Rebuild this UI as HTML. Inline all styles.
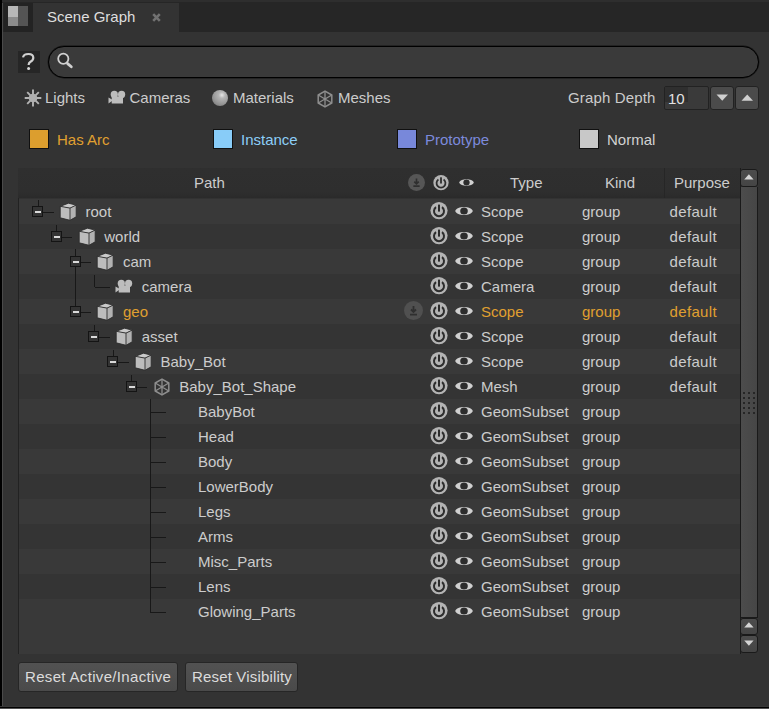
<!DOCTYPE html><html><head><meta charset="utf-8"><style>
*{margin:0;padding:0;box-sizing:border-box}
html,body{width:769px;height:709px;overflow:hidden;background:#333333;font-family:"Liberation Sans",sans-serif;font-size:15px;color:#cccccc}
div,svg{position:absolute}
.t{white-space:nowrap;line-height:16px}
</style></head><body>
<div style="left:0px;top:0px;width:769px;height:32px;background:#262626"></div>
<div style="left:0px;top:0px;width:769px;height:2px;background:#2e2e2e"></div>
<div style="left:0px;top:0px;width:2px;height:709px;background:#000"></div>
<div style="left:2px;top:3px;width:1px;height:704px;background:#4a4a4a"></div>
<div style="left:0px;top:706px;width:769px;height:1px;background:#383838"></div>
<div style="left:0px;top:707px;width:769px;height:1px;background:#000"></div>
<div style="left:0px;top:708px;width:769px;height:1px;background:#505050"></div>
<div style="left:4px;top:3px;width:29px;height:29px;background:#232323"></div>
<div style="left:8px;top:6px;width:10px;height:11px;background:#b8b8b8"></div>
<div style="left:8px;top:17px;width:10px;height:9px;background:#8c8c8c"></div>
<div style="left:18px;top:6px;width:10px;height:20px;background:#545454"></div>
<div style="left:33px;top:3px;width:146px;height:29px;background:#333"></div>
<div class="t" style="left:47px;top:9px;color:#dedede">Scene Graph</div>
<svg style="left:152px;top:13px" width="9" height="9" viewBox="0 0 9 9"><path d="M1.2 1.2 L7.8 7.8 M7.8 1.2 L1.2 7.8" stroke="#727272" stroke-width="2.6"/></svg>
<div style="left:18px;top:51px;width:22px;height:22px;background:#262626"></div>
<svg style="left:18px;top:51px" width="22" height="22" viewBox="0 0 22 22"><path d="M5 6.4 Q5.6 3 10.5 3 Q15.3 3 15.3 6.7 Q15.3 9.2 12.5 10.8 Q10.6 11.9 10.6 14" fill="none" stroke="#d0d0d0" stroke-width="2.2"/><circle cx="10.6" cy="17.6" r="1.5" fill="#d8d8d8"/></svg>
<div style="left:48px;top:46px;width:711px;height:32px;border:1px solid #000;border-radius:16px;background:#3a3a3a;box-shadow:0 0 0 0.4px rgba(0,0,0,0.6)"></div>
<svg style="left:54px;top:49px" width="22" height="22" viewBox="0 0 22 22"><circle cx="9.3" cy="9.8" r="5.1" fill="#2e2e2e" stroke="#d0d0d0" stroke-width="1.8"/><path d="M13.6 14.6 L17.3 17.8" stroke="#d0d0d0" stroke-width="2.8" stroke-linecap="round"/></svg>
<svg style="left:24px;top:89px" width="18" height="18" viewBox="0 0 18 18"><path d="M9 0.5 V17.5 M0.7 9 H17.3 M3.2 3.2 L14.8 14.8 M14.8 3.2 L3.2 14.8" stroke="#b4b4b4" stroke-width="1.9"/><circle cx="9" cy="9" r="4.3" fill="#b0b0b0"/></svg>
<div class="t" style="left:45px;top:90px;">Lights</div>
<svg style="left:107px;top:89px" width="20" height="16" viewBox="0 0 20 16"><circle cx="7.3" cy="5.4" r="3.6" fill="#bdbdbd"/><circle cx="14.6" cy="5.4" r="3.6" fill="#bdbdbd"/><rect x="4.7" y="7.5" width="11.3" height="7" fill="#bdbdbd"/><path d="M1.5 8.5 L5 10.5 L5 12 L1.5 14.5 Z" fill="#bdbdbd"/></svg>
<div class="t" style="left:129.5px;top:90px;">Cameras</div>
<div style="left:212px;top:90px;width:16px;height:16px;border-radius:50%;background:radial-gradient(circle at 62% 32%,#e6e6e6 0,#b4b4b4 22%,#9a9a9a 55%,#6e6e6e 100%)"></div>
<div class="t" style="left:233px;top:90px;">Materials</div>
<svg style="left:316px;top:90px" width="18" height="18" viewBox="0 0 18 18"><path d="M9 1.1 L15.8 5 L15.8 13 L9 16.9 L2.2 13 L2.2 5 Z" fill="none" stroke="#8e8e8e" stroke-width="1.5" stroke-linejoin="round"/><path d="M2.2 5 L15.8 13 M15.8 5 L2.2 13 M9 1.1 L9 16.9" stroke="#8e8e8e" stroke-width="1.3"/></svg>
<div class="t" style="left:338px;top:90px;">Meshes</div>
<div class="t" style="left:568px;top:90px;letter-spacing:0.15px">Graph Depth</div>
<div style="left:664px;top:86px;width:45px;height:24px;background:#3a3a3a;border:1px solid #222;border-radius:2px"></div>
<div style="left:665px;top:87px;width:23px;height:15px;background:#2f2f2f"></div>
<div class="t" style="left:668px;top:91px;color:#e2e2e2">10</div>
<div style="left:710px;top:86px;width:24px;height:24px;background:#4b4b4b;border:1px solid #222;border-radius:3px"></div>
<svg style="left:716px;top:94px" width="13" height="7" viewBox="0 0 13 7"><path d="M0.5 0.5 L12 0.5 L6.25 6.8 Z" fill="#cfcfcf"/></svg>
<div style="left:735px;top:86px;width:24px;height:24px;background:#4b4b4b;border:1px solid #222;border-radius:3px"></div>
<svg style="left:741px;top:94px" width="13" height="7" viewBox="0 0 13 7"><path d="M0.5 6.8 L12 6.8 L6.25 0.5 Z" fill="#cfcfcf"/></svg>
<div style="left:29px;top:129px;width:20px;height:20px;background:#dc9e2e;border:1px solid #101010"></div>
<div class="t" style="left:57px;top:132px;color:#e0a030">Has Arc</div>
<div style="left:213px;top:129px;width:20px;height:20px;background:#88ccf8;border:1px solid #101010"></div>
<div class="t" style="left:241px;top:132px;color:#8ccef8">Instance</div>
<div style="left:397px;top:129px;width:20px;height:20px;background:#7888da;border:1px solid #101010"></div>
<div class="t" style="left:425px;top:132px;color:#7c8adc">Prototype</div>
<div style="left:579px;top:129px;width:20px;height:20px;background:#c8c8c8;border:1px solid #101010"></div>
<div class="t" style="left:607px;top:132px;color:#d2d2d2">Normal</div>
<div style="left:18px;top:168px;width:723px;height:486px;background:#393939"></div>
<div style="left:18px;top:168px;width:722px;height:30px;background:linear-gradient(180deg,#2f2f2f 0,#2e2e2e 80%,#2a2a2a 100%)"></div>
<div style="left:19px;top:198px;width:721px;height:1px;background:#323232"></div>
<div class="t" style="left:194px;top:175px;">Path</div>
<svg style="left:408px;top:174px" width="17" height="17" viewBox="0 0 19 19"><circle cx="9.5" cy="9.5" r="9.5" fill="#565656"/><path d="M9.5 5 L9.5 11 M7 8.5 L9.5 11 L12 8.5 M6 13.6 L13 13.6" stroke="#2f2f2f" stroke-width="1.8" fill="none"/></svg>
<svg style="left:433px;top:175px" width="16" height="16" viewBox="0 0 18 18"><circle cx="9" cy="8.6" r="8.6" fill="#b4b4b4"/><path d="M6.1 5.1 A5 5 0 1 0 11.9 5.1" fill="none" stroke="#2c2c2c" stroke-width="2"/><rect x="6.7" y="2" width="4.6" height="8.2" fill="#b4b4b4"/><rect x="8" y="2.6" width="2" height="7" fill="#2c2c2c"/></svg>
<svg style="left:459px;top:178px" width="15" height="9" viewBox="0 0 18 10"><path d="M0.2 5 C2 -0.3 16 -0.3 17.8 5 C16 10.3 2 10.3 0.2 5 Z" fill="#d0d0d0"/><ellipse cx="9" cy="5" rx="3.8" ry="3.6" fill="#2c2c2c"/></svg>
<div class="t" style="left:510px;top:175px;">Type</div>
<div class="t" style="left:605px;top:175px;">Kind</div>
<div style="left:664px;top:168px;width:1px;height:30px;background:#262626"></div>
<div class="t" style="left:674px;top:175px;">Purpose</div>
<div style="left:18px;top:198px;width:1px;height:456px;background:#222"></div>
<div style="left:19px;top:199px;width:721px;height:25px;background:#393939"></div>
<div style="left:19px;top:224px;width:721px;height:25px;background:#343434"></div>
<div style="left:19px;top:249px;width:721px;height:25px;background:#393939"></div>
<div style="left:19px;top:274px;width:721px;height:25px;background:#343434"></div>
<div style="left:19px;top:299px;width:721px;height:25px;background:#393939"></div>
<div style="left:19px;top:324px;width:721px;height:25px;background:#343434"></div>
<div style="left:19px;top:349px;width:721px;height:25px;background:#393939"></div>
<div style="left:19px;top:374px;width:721px;height:25px;background:#343434"></div>
<div style="left:19px;top:399px;width:721px;height:25px;background:#393939"></div>
<div style="left:19px;top:424px;width:721px;height:25px;background:#343434"></div>
<div style="left:19px;top:449px;width:721px;height:25px;background:#393939"></div>
<div style="left:19px;top:474px;width:721px;height:25px;background:#343434"></div>
<div style="left:19px;top:499px;width:721px;height:25px;background:#393939"></div>
<div style="left:19px;top:524px;width:721px;height:25px;background:#343434"></div>
<div style="left:19px;top:549px;width:721px;height:25px;background:#393939"></div>
<div style="left:19px;top:574px;width:721px;height:25px;background:#343434"></div>
<div style="left:19px;top:599px;width:721px;height:25px;background:#393939"></div>
<div style="left:75px;top:249px;width:1px;height:57px;background:#181818"></div>
<div style="left:150px;top:399px;width:1px;height:214px;background:#181818"></div>
<div class="t" style="left:85.5px;top:204px;color:#cccccc">root</div>
<svg style="left:430px;top:202px" width="18" height="18" viewBox="0 0 18 18"><circle cx="9" cy="8.6" r="8.6" fill="#b4b4b4"/><path d="M6.1 5.1 A5 5 0 1 0 11.9 5.1" fill="none" stroke="#2c2c2c" stroke-width="2"/><rect x="6.7" y="2" width="4.6" height="8.2" fill="#b4b4b4"/><rect x="8" y="2.6" width="2" height="7" fill="#2c2c2c"/></svg>
<svg style="left:455px;top:206px" width="18" height="10" viewBox="0 0 18 10"><path d="M0.2 5 C2 -0.3 16 -0.3 17.8 5 C16 10.3 2 10.3 0.2 5 Z" fill="#d0d0d0"/><ellipse cx="9" cy="5" rx="3.8" ry="3.6" fill="#2c2c2c"/></svg>
<div class="t" style="left:481px;top:204px;color:#cccccc">Scope</div>
<div class="t" style="left:582px;top:204px;color:#cccccc">group</div>
<div class="t" style="left:669.5px;top:204px;color:#cccccc;letter-spacing:0.35px">default</div>
<div style="left:38px;top:200px;width:1px;height:6px;background:#181818"></div>
<div style="left:43px;top:212px;width:11px;height:1px;background:#181818"></div>
<div style="left:32px;top:206px;width:11px;height:11px;background:#343434;border:1px solid #141414"></div>
<div style="left:35px;top:211px;width:6px;height:2px;background:#dadada"></div>
<svg style="left:59px;top:202px" width="19" height="20" viewBox="0 0 19 20"><path d="M9.5 1.2 L17.2 3.1 L11 6.1 L1.2 4.3 Z" fill="#cacaca"/><path d="M1.2 4.3 L11 6.1 L11 18.3 L1.2 15.8 Z" fill="#bdbdbd"/><path d="M11 6.1 L17.2 3.1 L17.2 14.8 L11 18.3 Z" fill="#b2b2b2"/><path d="M9.5 1.2 L17.2 3.1 L17.2 14.8 L11 18.3 L1.2 15.8 L1.2 4.3 Z M1.2 4.3 L11 6.1 L17.2 3.1 M11 6.1 L11 18.3" fill="none" stroke="#2c2c2c" stroke-width="0.9" stroke-linejoin="round"/></svg>
<div class="t" style="left:104.25px;top:229px;color:#cccccc">world</div>
<svg style="left:430px;top:227px" width="18" height="18" viewBox="0 0 18 18"><circle cx="9" cy="8.6" r="8.6" fill="#b4b4b4"/><path d="M6.1 5.1 A5 5 0 1 0 11.9 5.1" fill="none" stroke="#2c2c2c" stroke-width="2"/><rect x="6.7" y="2" width="4.6" height="8.2" fill="#b4b4b4"/><rect x="8" y="2.6" width="2" height="7" fill="#2c2c2c"/></svg>
<svg style="left:455px;top:231px" width="18" height="10" viewBox="0 0 18 10"><path d="M0.2 5 C2 -0.3 16 -0.3 17.8 5 C16 10.3 2 10.3 0.2 5 Z" fill="#d0d0d0"/><ellipse cx="9" cy="5" rx="3.8" ry="3.6" fill="#2c2c2c"/></svg>
<div class="t" style="left:481px;top:229px;color:#cccccc">Scope</div>
<div class="t" style="left:582px;top:229px;color:#cccccc">group</div>
<div class="t" style="left:669.5px;top:229px;color:#cccccc;letter-spacing:0.35px">default</div>
<div style="left:56px;top:225px;width:1px;height:6px;background:#181818"></div>
<div style="left:62px;top:237px;width:10px;height:1px;background:#181818"></div>
<div style="left:51px;top:231px;width:11px;height:11px;background:#343434;border:1px solid #141414"></div>
<div style="left:54px;top:236px;width:6px;height:2px;background:#dadada"></div>
<svg style="left:78px;top:227px" width="19" height="20" viewBox="0 0 19 20"><path d="M9.5 1.2 L17.2 3.1 L11 6.1 L1.2 4.3 Z" fill="#cacaca"/><path d="M1.2 4.3 L11 6.1 L11 18.3 L1.2 15.8 Z" fill="#bdbdbd"/><path d="M11 6.1 L17.2 3.1 L17.2 14.8 L11 18.3 Z" fill="#b2b2b2"/><path d="M9.5 1.2 L17.2 3.1 L17.2 14.8 L11 18.3 L1.2 15.8 L1.2 4.3 Z M1.2 4.3 L11 6.1 L17.2 3.1 M11 6.1 L11 18.3" fill="none" stroke="#2c2c2c" stroke-width="0.9" stroke-linejoin="round"/></svg>
<div class="t" style="left:123.0px;top:254px;color:#cccccc">cam</div>
<svg style="left:430px;top:252px" width="18" height="18" viewBox="0 0 18 18"><circle cx="9" cy="8.6" r="8.6" fill="#b4b4b4"/><path d="M6.1 5.1 A5 5 0 1 0 11.9 5.1" fill="none" stroke="#2c2c2c" stroke-width="2"/><rect x="6.7" y="2" width="4.6" height="8.2" fill="#b4b4b4"/><rect x="8" y="2.6" width="2" height="7" fill="#2c2c2c"/></svg>
<svg style="left:455px;top:256px" width="18" height="10" viewBox="0 0 18 10"><path d="M0.2 5 C2 -0.3 16 -0.3 17.8 5 C16 10.3 2 10.3 0.2 5 Z" fill="#d0d0d0"/><ellipse cx="9" cy="5" rx="3.8" ry="3.6" fill="#2c2c2c"/></svg>
<div class="t" style="left:481px;top:254px;color:#cccccc">Scope</div>
<div class="t" style="left:582px;top:254px;color:#cccccc">group</div>
<div class="t" style="left:669.5px;top:254px;color:#cccccc;letter-spacing:0.35px">default</div>
<div style="left:75px;top:250px;width:1px;height:6px;background:#181818"></div>
<div style="left:81px;top:262px;width:10px;height:1px;background:#181818"></div>
<div style="left:70px;top:256px;width:11px;height:11px;background:#343434;border:1px solid #141414"></div>
<div style="left:73px;top:261px;width:6px;height:2px;background:#dadada"></div>
<svg style="left:96px;top:252px" width="19" height="20" viewBox="0 0 19 20"><path d="M9.5 1.2 L17.2 3.1 L11 6.1 L1.2 4.3 Z" fill="#cacaca"/><path d="M1.2 4.3 L11 6.1 L11 18.3 L1.2 15.8 Z" fill="#bdbdbd"/><path d="M11 6.1 L17.2 3.1 L17.2 14.8 L11 18.3 Z" fill="#b2b2b2"/><path d="M9.5 1.2 L17.2 3.1 L17.2 14.8 L11 18.3 L1.2 15.8 L1.2 4.3 Z M1.2 4.3 L11 6.1 L17.2 3.1 M11 6.1 L11 18.3" fill="none" stroke="#2c2c2c" stroke-width="0.9" stroke-linejoin="round"/></svg>
<div class="t" style="left:141.75px;top:279px;color:#cccccc">camera</div>
<svg style="left:430px;top:277px" width="18" height="18" viewBox="0 0 18 18"><circle cx="9" cy="8.6" r="8.6" fill="#b4b4b4"/><path d="M6.1 5.1 A5 5 0 1 0 11.9 5.1" fill="none" stroke="#2c2c2c" stroke-width="2"/><rect x="6.7" y="2" width="4.6" height="8.2" fill="#b4b4b4"/><rect x="8" y="2.6" width="2" height="7" fill="#2c2c2c"/></svg>
<svg style="left:455px;top:281px" width="18" height="10" viewBox="0 0 18 10"><path d="M0.2 5 C2 -0.3 16 -0.3 17.8 5 C16 10.3 2 10.3 0.2 5 Z" fill="#d0d0d0"/><ellipse cx="9" cy="5" rx="3.8" ry="3.6" fill="#2c2c2c"/></svg>
<div class="t" style="left:481px;top:279px;color:#cccccc">Camera</div>
<div class="t" style="left:582px;top:279px;color:#cccccc">group</div>
<div class="t" style="left:669.5px;top:279px;color:#cccccc;letter-spacing:0.35px">default</div>
<div style="left:94px;top:275px;width:1px;height:12px;background:#181818"></div>
<div style="left:95px;top:287px;width:15px;height:1px;background:#181818"></div>
<svg style="left:114px;top:278px" width="20" height="16" viewBox="0 0 20 16"><circle cx="7.3" cy="5.4" r="3.6" fill="#bdbdbd"/><circle cx="14.6" cy="5.4" r="3.6" fill="#bdbdbd"/><rect x="4.7" y="7.5" width="11.3" height="7" fill="#bdbdbd"/><path d="M1.5 8.5 L5 10.5 L5 12 L1.5 14.5 Z" fill="#bdbdbd"/></svg>
<div class="t" style="left:123.0px;top:304px;color:#e0a030">geo</div>
<svg style="left:404px;top:301px" width="19" height="19" viewBox="0 0 19 19"><circle cx="9.5" cy="9.5" r="9.5" fill="#505050"/><path d="M9.5 5 L9.5 11 M7 8.5 L9.5 11 L12 8.5 M6 13.6 L13 13.6" stroke="#2f2f2f" stroke-width="1.8" fill="none"/></svg>
<svg style="left:430px;top:302px" width="18" height="18" viewBox="0 0 18 18"><circle cx="9" cy="8.6" r="8.6" fill="#b4b4b4"/><path d="M6.1 5.1 A5 5 0 1 0 11.9 5.1" fill="none" stroke="#2c2c2c" stroke-width="2"/><rect x="6.7" y="2" width="4.6" height="8.2" fill="#b4b4b4"/><rect x="8" y="2.6" width="2" height="7" fill="#2c2c2c"/></svg>
<svg style="left:455px;top:306px" width="18" height="10" viewBox="0 0 18 10"><path d="M0.2 5 C2 -0.3 16 -0.3 17.8 5 C16 10.3 2 10.3 0.2 5 Z" fill="#d0d0d0"/><ellipse cx="9" cy="5" rx="3.8" ry="3.6" fill="#2c2c2c"/></svg>
<div class="t" style="left:481px;top:304px;color:#e0a030">Scope</div>
<div class="t" style="left:582px;top:304px;color:#e0a030">group</div>
<div class="t" style="left:669.5px;top:304px;color:#e0a030;letter-spacing:0.35px">default</div>
<div style="left:75px;top:300px;width:1px;height:6px;background:#181818"></div>
<div style="left:81px;top:312px;width:10px;height:1px;background:#181818"></div>
<div style="left:70px;top:306px;width:11px;height:11px;background:#343434;border:1px solid #141414"></div>
<div style="left:73px;top:311px;width:6px;height:2px;background:#dadada"></div>
<svg style="left:96px;top:302px" width="19" height="20" viewBox="0 0 19 20"><path d="M9.5 1.2 L17.2 3.1 L11 6.1 L1.2 4.3 Z" fill="#cacaca"/><path d="M1.2 4.3 L11 6.1 L11 18.3 L1.2 15.8 Z" fill="#bdbdbd"/><path d="M11 6.1 L17.2 3.1 L17.2 14.8 L11 18.3 Z" fill="#b2b2b2"/><path d="M9.5 1.2 L17.2 3.1 L17.2 14.8 L11 18.3 L1.2 15.8 L1.2 4.3 Z M1.2 4.3 L11 6.1 L17.2 3.1 M11 6.1 L11 18.3" fill="none" stroke="#2c2c2c" stroke-width="0.9" stroke-linejoin="round"/></svg>
<div class="t" style="left:141.75px;top:329px;color:#cccccc">asset</div>
<svg style="left:430px;top:327px" width="18" height="18" viewBox="0 0 18 18"><circle cx="9" cy="8.6" r="8.6" fill="#b4b4b4"/><path d="M6.1 5.1 A5 5 0 1 0 11.9 5.1" fill="none" stroke="#2c2c2c" stroke-width="2"/><rect x="6.7" y="2" width="4.6" height="8.2" fill="#b4b4b4"/><rect x="8" y="2.6" width="2" height="7" fill="#2c2c2c"/></svg>
<svg style="left:455px;top:331px" width="18" height="10" viewBox="0 0 18 10"><path d="M0.2 5 C2 -0.3 16 -0.3 17.8 5 C16 10.3 2 10.3 0.2 5 Z" fill="#d0d0d0"/><ellipse cx="9" cy="5" rx="3.8" ry="3.6" fill="#2c2c2c"/></svg>
<div class="t" style="left:481px;top:329px;color:#cccccc">Scope</div>
<div class="t" style="left:582px;top:329px;color:#cccccc">group</div>
<div class="t" style="left:669.5px;top:329px;color:#cccccc;letter-spacing:0.35px">default</div>
<div style="left:94px;top:325px;width:1px;height:6px;background:#181818"></div>
<div style="left:99px;top:337px;width:11px;height:1px;background:#181818"></div>
<div style="left:88px;top:331px;width:11px;height:11px;background:#343434;border:1px solid #141414"></div>
<div style="left:91px;top:336px;width:6px;height:2px;background:#dadada"></div>
<svg style="left:115px;top:327px" width="19" height="20" viewBox="0 0 19 20"><path d="M9.5 1.2 L17.2 3.1 L11 6.1 L1.2 4.3 Z" fill="#cacaca"/><path d="M1.2 4.3 L11 6.1 L11 18.3 L1.2 15.8 Z" fill="#bdbdbd"/><path d="M11 6.1 L17.2 3.1 L17.2 14.8 L11 18.3 Z" fill="#b2b2b2"/><path d="M9.5 1.2 L17.2 3.1 L17.2 14.8 L11 18.3 L1.2 15.8 L1.2 4.3 Z M1.2 4.3 L11 6.1 L17.2 3.1 M11 6.1 L11 18.3" fill="none" stroke="#2c2c2c" stroke-width="0.9" stroke-linejoin="round"/></svg>
<div class="t" style="left:160.5px;top:354px;color:#cccccc">Baby_Bot</div>
<svg style="left:430px;top:352px" width="18" height="18" viewBox="0 0 18 18"><circle cx="9" cy="8.6" r="8.6" fill="#b4b4b4"/><path d="M6.1 5.1 A5 5 0 1 0 11.9 5.1" fill="none" stroke="#2c2c2c" stroke-width="2"/><rect x="6.7" y="2" width="4.6" height="8.2" fill="#b4b4b4"/><rect x="8" y="2.6" width="2" height="7" fill="#2c2c2c"/></svg>
<svg style="left:455px;top:356px" width="18" height="10" viewBox="0 0 18 10"><path d="M0.2 5 C2 -0.3 16 -0.3 17.8 5 C16 10.3 2 10.3 0.2 5 Z" fill="#d0d0d0"/><ellipse cx="9" cy="5" rx="3.8" ry="3.6" fill="#2c2c2c"/></svg>
<div class="t" style="left:481px;top:354px;color:#cccccc">Scope</div>
<div class="t" style="left:582px;top:354px;color:#cccccc">group</div>
<div class="t" style="left:669.5px;top:354px;color:#cccccc;letter-spacing:0.35px">default</div>
<div style="left:113px;top:350px;width:1px;height:6px;background:#181818"></div>
<div style="left:118px;top:362px;width:11px;height:1px;background:#181818"></div>
<div style="left:107px;top:356px;width:11px;height:11px;background:#343434;border:1px solid #141414"></div>
<div style="left:110px;top:361px;width:6px;height:2px;background:#dadada"></div>
<svg style="left:134px;top:352px" width="19" height="20" viewBox="0 0 19 20"><path d="M9.5 1.2 L17.2 3.1 L11 6.1 L1.2 4.3 Z" fill="#cacaca"/><path d="M1.2 4.3 L11 6.1 L11 18.3 L1.2 15.8 Z" fill="#bdbdbd"/><path d="M11 6.1 L17.2 3.1 L17.2 14.8 L11 18.3 Z" fill="#b2b2b2"/><path d="M9.5 1.2 L17.2 3.1 L17.2 14.8 L11 18.3 L1.2 15.8 L1.2 4.3 Z M1.2 4.3 L11 6.1 L17.2 3.1 M11 6.1 L11 18.3" fill="none" stroke="#2c2c2c" stroke-width="0.9" stroke-linejoin="round"/></svg>
<div class="t" style="left:179.25px;top:379px;color:#cccccc">Baby_Bot_Shape</div>
<svg style="left:430px;top:377px" width="18" height="18" viewBox="0 0 18 18"><circle cx="9" cy="8.6" r="8.6" fill="#b4b4b4"/><path d="M6.1 5.1 A5 5 0 1 0 11.9 5.1" fill="none" stroke="#2c2c2c" stroke-width="2"/><rect x="6.7" y="2" width="4.6" height="8.2" fill="#b4b4b4"/><rect x="8" y="2.6" width="2" height="7" fill="#2c2c2c"/></svg>
<svg style="left:455px;top:381px" width="18" height="10" viewBox="0 0 18 10"><path d="M0.2 5 C2 -0.3 16 -0.3 17.8 5 C16 10.3 2 10.3 0.2 5 Z" fill="#d0d0d0"/><ellipse cx="9" cy="5" rx="3.8" ry="3.6" fill="#2c2c2c"/></svg>
<div class="t" style="left:481px;top:379px;color:#cccccc">Mesh</div>
<div class="t" style="left:582px;top:379px;color:#cccccc">group</div>
<div class="t" style="left:669.5px;top:379px;color:#cccccc;letter-spacing:0.35px">default</div>
<div style="left:131px;top:375px;width:1px;height:6px;background:#181818"></div>
<div style="left:137px;top:387px;width:10px;height:1px;background:#181818"></div>
<div style="left:126px;top:381px;width:11px;height:11px;background:#343434;border:1px solid #141414"></div>
<div style="left:129px;top:386px;width:6px;height:2px;background:#dadada"></div>
<svg style="left:153px;top:378px" width="18" height="18" viewBox="0 0 18 18"><path d="M9 1.1 L15.8 5 L15.8 13 L9 16.9 L2.2 13 L2.2 5 Z" fill="none" stroke="#8e8e8e" stroke-width="1.5" stroke-linejoin="round"/><path d="M2.2 5 L15.8 13 M15.8 5 L2.2 13 M9 1.1 L9 16.9" stroke="#8e8e8e" stroke-width="1.3"/></svg>
<div class="t" style="left:198.0px;top:404px;color:#cccccc">BabyBot</div>
<svg style="left:430px;top:402px" width="18" height="18" viewBox="0 0 18 18"><circle cx="9" cy="8.6" r="8.6" fill="#b4b4b4"/><path d="M6.1 5.1 A5 5 0 1 0 11.9 5.1" fill="none" stroke="#2c2c2c" stroke-width="2"/><rect x="6.7" y="2" width="4.6" height="8.2" fill="#b4b4b4"/><rect x="8" y="2.6" width="2" height="7" fill="#2c2c2c"/></svg>
<svg style="left:455px;top:406px" width="18" height="10" viewBox="0 0 18 10"><path d="M0.2 5 C2 -0.3 16 -0.3 17.8 5 C16 10.3 2 10.3 0.2 5 Z" fill="#d0d0d0"/><ellipse cx="9" cy="5" rx="3.8" ry="3.6" fill="#2c2c2c"/></svg>
<div class="t" style="left:481px;top:404px;color:#cccccc">GeomSubset</div>
<div class="t" style="left:582px;top:404px;color:#cccccc">group</div>
<div style="left:150px;top:400px;width:1px;height:12px;background:#181818"></div>
<div style="left:151px;top:412px;width:15px;height:1px;background:#181818"></div>
<div class="t" style="left:198.0px;top:429px;color:#cccccc">Head</div>
<svg style="left:430px;top:427px" width="18" height="18" viewBox="0 0 18 18"><circle cx="9" cy="8.6" r="8.6" fill="#b4b4b4"/><path d="M6.1 5.1 A5 5 0 1 0 11.9 5.1" fill="none" stroke="#2c2c2c" stroke-width="2"/><rect x="6.7" y="2" width="4.6" height="8.2" fill="#b4b4b4"/><rect x="8" y="2.6" width="2" height="7" fill="#2c2c2c"/></svg>
<svg style="left:455px;top:431px" width="18" height="10" viewBox="0 0 18 10"><path d="M0.2 5 C2 -0.3 16 -0.3 17.8 5 C16 10.3 2 10.3 0.2 5 Z" fill="#d0d0d0"/><ellipse cx="9" cy="5" rx="3.8" ry="3.6" fill="#2c2c2c"/></svg>
<div class="t" style="left:481px;top:429px;color:#cccccc">GeomSubset</div>
<div class="t" style="left:582px;top:429px;color:#cccccc">group</div>
<div style="left:150px;top:425px;width:1px;height:12px;background:#181818"></div>
<div style="left:151px;top:437px;width:15px;height:1px;background:#181818"></div>
<div class="t" style="left:198.0px;top:454px;color:#cccccc">Body</div>
<svg style="left:430px;top:452px" width="18" height="18" viewBox="0 0 18 18"><circle cx="9" cy="8.6" r="8.6" fill="#b4b4b4"/><path d="M6.1 5.1 A5 5 0 1 0 11.9 5.1" fill="none" stroke="#2c2c2c" stroke-width="2"/><rect x="6.7" y="2" width="4.6" height="8.2" fill="#b4b4b4"/><rect x="8" y="2.6" width="2" height="7" fill="#2c2c2c"/></svg>
<svg style="left:455px;top:456px" width="18" height="10" viewBox="0 0 18 10"><path d="M0.2 5 C2 -0.3 16 -0.3 17.8 5 C16 10.3 2 10.3 0.2 5 Z" fill="#d0d0d0"/><ellipse cx="9" cy="5" rx="3.8" ry="3.6" fill="#2c2c2c"/></svg>
<div class="t" style="left:481px;top:454px;color:#cccccc">GeomSubset</div>
<div class="t" style="left:582px;top:454px;color:#cccccc">group</div>
<div style="left:150px;top:450px;width:1px;height:12px;background:#181818"></div>
<div style="left:151px;top:462px;width:15px;height:1px;background:#181818"></div>
<div class="t" style="left:198.0px;top:479px;color:#cccccc">LowerBody</div>
<svg style="left:430px;top:477px" width="18" height="18" viewBox="0 0 18 18"><circle cx="9" cy="8.6" r="8.6" fill="#b4b4b4"/><path d="M6.1 5.1 A5 5 0 1 0 11.9 5.1" fill="none" stroke="#2c2c2c" stroke-width="2"/><rect x="6.7" y="2" width="4.6" height="8.2" fill="#b4b4b4"/><rect x="8" y="2.6" width="2" height="7" fill="#2c2c2c"/></svg>
<svg style="left:455px;top:481px" width="18" height="10" viewBox="0 0 18 10"><path d="M0.2 5 C2 -0.3 16 -0.3 17.8 5 C16 10.3 2 10.3 0.2 5 Z" fill="#d0d0d0"/><ellipse cx="9" cy="5" rx="3.8" ry="3.6" fill="#2c2c2c"/></svg>
<div class="t" style="left:481px;top:479px;color:#cccccc">GeomSubset</div>
<div class="t" style="left:582px;top:479px;color:#cccccc">group</div>
<div style="left:150px;top:475px;width:1px;height:12px;background:#181818"></div>
<div style="left:151px;top:487px;width:15px;height:1px;background:#181818"></div>
<div class="t" style="left:198.0px;top:504px;color:#cccccc">Legs</div>
<svg style="left:430px;top:502px" width="18" height="18" viewBox="0 0 18 18"><circle cx="9" cy="8.6" r="8.6" fill="#b4b4b4"/><path d="M6.1 5.1 A5 5 0 1 0 11.9 5.1" fill="none" stroke="#2c2c2c" stroke-width="2"/><rect x="6.7" y="2" width="4.6" height="8.2" fill="#b4b4b4"/><rect x="8" y="2.6" width="2" height="7" fill="#2c2c2c"/></svg>
<svg style="left:455px;top:506px" width="18" height="10" viewBox="0 0 18 10"><path d="M0.2 5 C2 -0.3 16 -0.3 17.8 5 C16 10.3 2 10.3 0.2 5 Z" fill="#d0d0d0"/><ellipse cx="9" cy="5" rx="3.8" ry="3.6" fill="#2c2c2c"/></svg>
<div class="t" style="left:481px;top:504px;color:#cccccc">GeomSubset</div>
<div class="t" style="left:582px;top:504px;color:#cccccc">group</div>
<div style="left:150px;top:500px;width:1px;height:12px;background:#181818"></div>
<div style="left:151px;top:512px;width:15px;height:1px;background:#181818"></div>
<div class="t" style="left:198.0px;top:529px;color:#cccccc">Arms</div>
<svg style="left:430px;top:527px" width="18" height="18" viewBox="0 0 18 18"><circle cx="9" cy="8.6" r="8.6" fill="#b4b4b4"/><path d="M6.1 5.1 A5 5 0 1 0 11.9 5.1" fill="none" stroke="#2c2c2c" stroke-width="2"/><rect x="6.7" y="2" width="4.6" height="8.2" fill="#b4b4b4"/><rect x="8" y="2.6" width="2" height="7" fill="#2c2c2c"/></svg>
<svg style="left:455px;top:531px" width="18" height="10" viewBox="0 0 18 10"><path d="M0.2 5 C2 -0.3 16 -0.3 17.8 5 C16 10.3 2 10.3 0.2 5 Z" fill="#d0d0d0"/><ellipse cx="9" cy="5" rx="3.8" ry="3.6" fill="#2c2c2c"/></svg>
<div class="t" style="left:481px;top:529px;color:#cccccc">GeomSubset</div>
<div class="t" style="left:582px;top:529px;color:#cccccc">group</div>
<div style="left:150px;top:525px;width:1px;height:12px;background:#181818"></div>
<div style="left:151px;top:537px;width:15px;height:1px;background:#181818"></div>
<div class="t" style="left:198.0px;top:554px;color:#cccccc">Misc_Parts</div>
<svg style="left:430px;top:552px" width="18" height="18" viewBox="0 0 18 18"><circle cx="9" cy="8.6" r="8.6" fill="#b4b4b4"/><path d="M6.1 5.1 A5 5 0 1 0 11.9 5.1" fill="none" stroke="#2c2c2c" stroke-width="2"/><rect x="6.7" y="2" width="4.6" height="8.2" fill="#b4b4b4"/><rect x="8" y="2.6" width="2" height="7" fill="#2c2c2c"/></svg>
<svg style="left:455px;top:556px" width="18" height="10" viewBox="0 0 18 10"><path d="M0.2 5 C2 -0.3 16 -0.3 17.8 5 C16 10.3 2 10.3 0.2 5 Z" fill="#d0d0d0"/><ellipse cx="9" cy="5" rx="3.8" ry="3.6" fill="#2c2c2c"/></svg>
<div class="t" style="left:481px;top:554px;color:#cccccc">GeomSubset</div>
<div class="t" style="left:582px;top:554px;color:#cccccc">group</div>
<div style="left:150px;top:550px;width:1px;height:12px;background:#181818"></div>
<div style="left:151px;top:562px;width:15px;height:1px;background:#181818"></div>
<div class="t" style="left:198.0px;top:579px;color:#cccccc">Lens</div>
<svg style="left:430px;top:577px" width="18" height="18" viewBox="0 0 18 18"><circle cx="9" cy="8.6" r="8.6" fill="#b4b4b4"/><path d="M6.1 5.1 A5 5 0 1 0 11.9 5.1" fill="none" stroke="#2c2c2c" stroke-width="2"/><rect x="6.7" y="2" width="4.6" height="8.2" fill="#b4b4b4"/><rect x="8" y="2.6" width="2" height="7" fill="#2c2c2c"/></svg>
<svg style="left:455px;top:581px" width="18" height="10" viewBox="0 0 18 10"><path d="M0.2 5 C2 -0.3 16 -0.3 17.8 5 C16 10.3 2 10.3 0.2 5 Z" fill="#d0d0d0"/><ellipse cx="9" cy="5" rx="3.8" ry="3.6" fill="#2c2c2c"/></svg>
<div class="t" style="left:481px;top:579px;color:#cccccc">GeomSubset</div>
<div class="t" style="left:582px;top:579px;color:#cccccc">group</div>
<div style="left:150px;top:575px;width:1px;height:12px;background:#181818"></div>
<div style="left:151px;top:587px;width:15px;height:1px;background:#181818"></div>
<div class="t" style="left:198.0px;top:604px;color:#cccccc">Glowing_Parts</div>
<svg style="left:430px;top:602px" width="18" height="18" viewBox="0 0 18 18"><circle cx="9" cy="8.6" r="8.6" fill="#b4b4b4"/><path d="M6.1 5.1 A5 5 0 1 0 11.9 5.1" fill="none" stroke="#2c2c2c" stroke-width="2"/><rect x="6.7" y="2" width="4.6" height="8.2" fill="#b4b4b4"/><rect x="8" y="2.6" width="2" height="7" fill="#2c2c2c"/></svg>
<svg style="left:455px;top:606px" width="18" height="10" viewBox="0 0 18 10"><path d="M0.2 5 C2 -0.3 16 -0.3 17.8 5 C16 10.3 2 10.3 0.2 5 Z" fill="#d0d0d0"/><ellipse cx="9" cy="5" rx="3.8" ry="3.6" fill="#2c2c2c"/></svg>
<div class="t" style="left:481px;top:604px;color:#cccccc">GeomSubset</div>
<div class="t" style="left:582px;top:604px;color:#cccccc">group</div>
<div style="left:150px;top:600px;width:1px;height:12px;background:#181818"></div>
<div style="left:151px;top:612px;width:15px;height:1px;background:#181818"></div>
<div style="left:740px;top:168px;width:1px;height:486px;background:#1c1c1c"></div>
<div style="left:740px;top:169px;width:18px;height:18px;background:linear-gradient(180deg,#4c4c4c,#454545);border:1px solid #1a1a1a;border-radius:3px"></div>
<svg style="left:744px;top:174px" width="10" height="6" viewBox="0 0 10 6"><path d="M0.2 5.6 L9.6 5.6 L4.9 0.3 Z" fill="#d4d4d4"/></svg>
<div style="left:740px;top:187px;width:18px;height:431px;background:linear-gradient(90deg,#4c4c4c,#464646);border-left:1px solid #1a1a1a;border-right:1px solid #1a1a1a;border-bottom:1px solid #1a1a1a"></div>
<div style="left:740px;top:618px;width:18px;height:17px;background:linear-gradient(180deg,#4c4c4c,#454545);border:1px solid #1a1a1a;border-radius:3px"></div>
<svg style="left:744px;top:622px" width="10" height="6" viewBox="0 0 10 6"><path d="M0.2 5.6 L9.6 5.6 L4.9 0.3 Z" fill="#d4d4d4"/></svg>
<div style="left:740px;top:635px;width:18px;height:18px;background:linear-gradient(180deg,#4c4c4c,#454545);border:1px solid #1a1a1a;border-radius:3px"></div>
<svg style="left:744px;top:640px" width="10" height="6" viewBox="0 0 10 6"><path d="M0.2 0.4 L9.6 0.4 L4.9 5.7 Z" fill="#d4d4d4"/></svg>
<div style="left:743px;top:392px;width:2px;height:2px;background:#262626"></div>
<div style="left:748px;top:392px;width:2px;height:2px;background:#262626"></div>
<div style="left:753px;top:392px;width:2px;height:2px;background:#262626"></div>
<div style="left:743px;top:397px;width:2px;height:2px;background:#262626"></div>
<div style="left:748px;top:397px;width:2px;height:2px;background:#262626"></div>
<div style="left:753px;top:397px;width:2px;height:2px;background:#262626"></div>
<div style="left:743px;top:402px;width:2px;height:2px;background:#262626"></div>
<div style="left:748px;top:402px;width:2px;height:2px;background:#262626"></div>
<div style="left:753px;top:402px;width:2px;height:2px;background:#262626"></div>
<div style="left:743px;top:407px;width:2px;height:2px;background:#262626"></div>
<div style="left:748px;top:407px;width:2px;height:2px;background:#262626"></div>
<div style="left:753px;top:407px;width:2px;height:2px;background:#262626"></div>
<div style="left:743px;top:412px;width:2px;height:2px;background:#262626"></div>
<div style="left:748px;top:412px;width:2px;height:2px;background:#262626"></div>
<div style="left:753px;top:412px;width:2px;height:2px;background:#262626"></div>
<div style="left:18px;top:662px;width:160px;height:30px;background:linear-gradient(180deg,#525252,#4a4a4a);border:1px solid #262626;border-radius:3px"></div>
<div class="t" style="left:25px;top:669px;color:#dcdcdc;letter-spacing:0.33px">Reset Active/Inactive</div>
<div style="left:185px;top:662px;width:113px;height:30px;background:linear-gradient(180deg,#525252,#4a4a4a);border:1px solid #262626;border-radius:3px"></div>
<div class="t" style="left:192px;top:669px;color:#dcdcdc;letter-spacing:0.17px">Reset Visibility</div>
</body></html>
